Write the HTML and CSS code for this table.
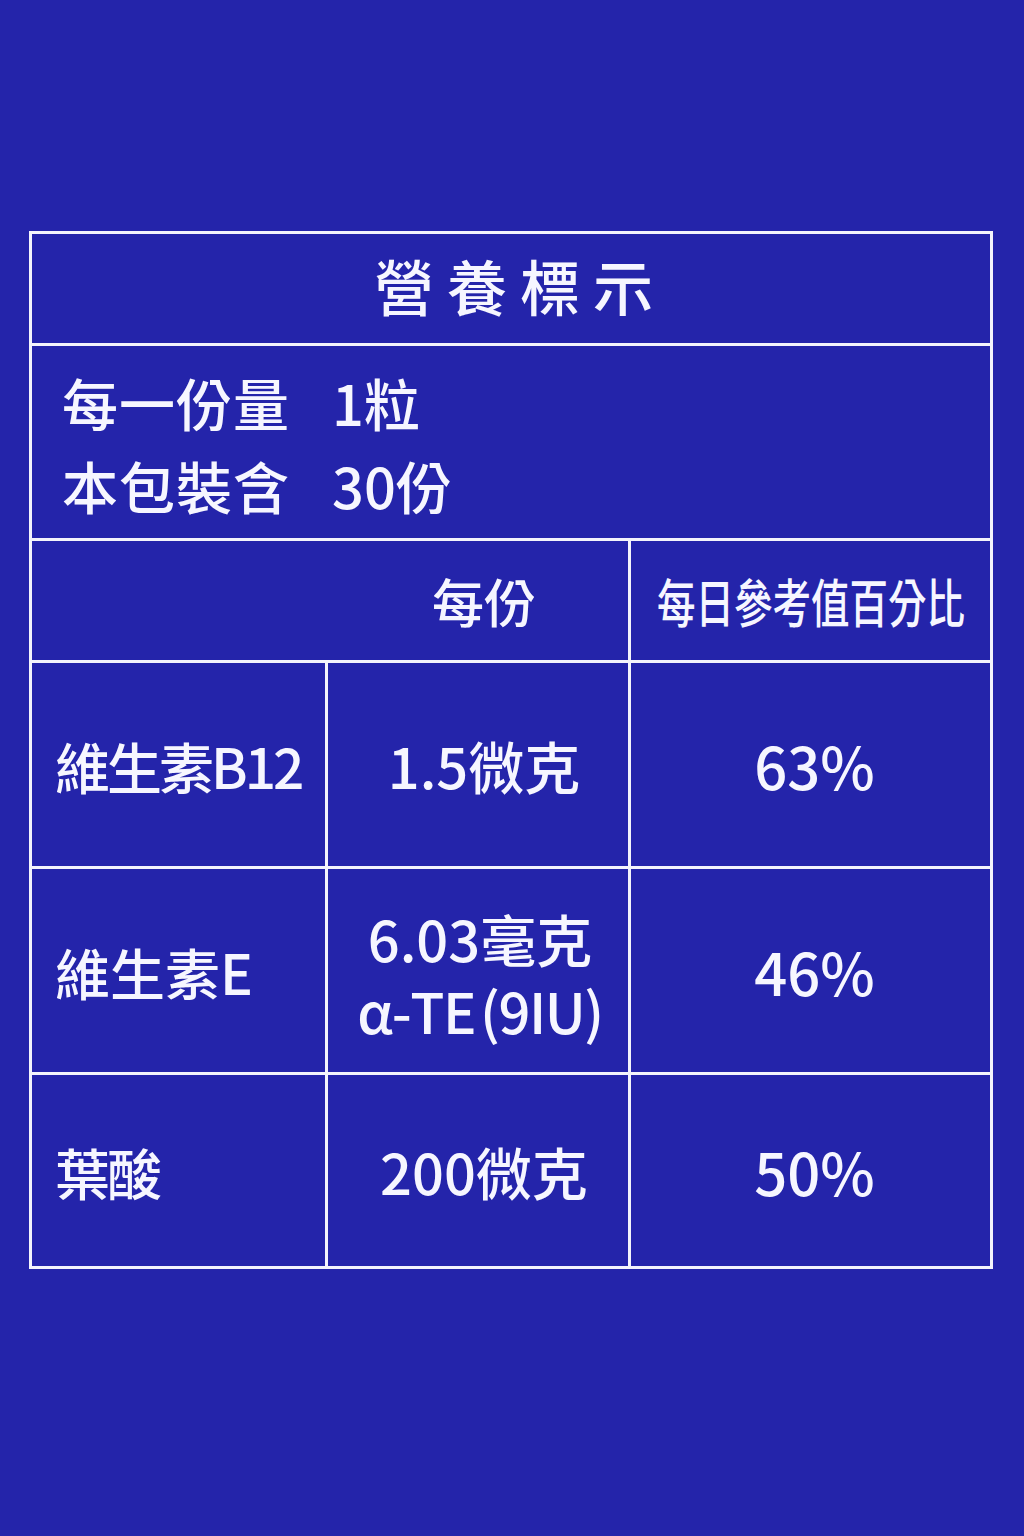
FILE: index.html
```html
<!DOCTYPE html>
<html lang="zh-Hant">
<head>
<meta charset="utf-8">
<title>營養標示</title>
<link rel="stylesheet" href="styles.css">
</head>
<body>
<div class="label">
  <div class="title">營養標示</div>
  <div class="serving">
    <div class="line"><span class="k">每一份量</span><span class="v">1粒</span></div>
    <div class="line"><span class="k">本包裝含</span><span class="v">30份</span></div>
  </div>
  <div class="head head-per">每份</div>
  <div class="head head-dv"><span class="narrow">每日參考值百分比</span></div>
  <div class="cell name">維生素B12</div>
  <div class="cell amt">1.5微克</div>
  <div class="cell pct">63%</div>
  <div class="cell name name-e">維生素E</div>
  <div class="cell amt two"><span class="l1">6.03毫克</span><span class="l2">α-TE (9IU)</span></div>
  <div class="cell pct">46%</div>
  <div class="cell name">葉酸</div>
  <div class="cell amt">200微克</div>
  <div class="cell pct">50%</div>
</div>
</body>
</html>
```
FILE: styles.css
```css
html, body {
  margin: 0;
  padding: 0;
  background: #2424aa;
}
body {
  width: 1024px;
  height: 1536px;
  padding: 231px 0 0 29px;
  box-sizing: border-box;
  font-family: "Noto Sans CJK TC", "Noto Sans", sans-serif;
  color: #f6f6ff;
}
.label {
  box-sizing: border-box;
  width: 964px;
  height: 1038px;
  border: 3px solid #f4f4fc;
  background: #f4f4fc;
  display: grid;
  grid-template-columns: 293px 300px 359px;
  grid-template-rows: 109px 192px 119px 203px 203px 191px;
  gap: 3px;
}
.label > div {
  background: #2424aa;
}
.title {
  grid-column: 1 / 4;
  display: flex;
  align-items: center;
  justify-content: center;
  font-size: 60px;
  font-weight: 500;
  letter-spacing: 13px;
  padding: 0 0 8px 18px;
}
.serving {
  grid-column: 1 / 4;
  padding: 14px 0 0 30px;
  font-size: 56px;
  font-weight: 500;
  line-height: 83px;
}
.serving .k {
  display: inline-block;
  width: 270px;
  letter-spacing: 1px;
}
.head {
  display: flex;
  align-items: center;
  font-size: 52px;
  font-weight: 500;
}
.head-per {
  grid-column: 1 / 3;
  justify-content: center;
  padding-left: 308px;
}
.head-dv {
  justify-content: center;
}
.narrow {
  display: inline-block;
  transform: scaleX(0.74);
  white-space: nowrap;
}
.cell {
  display: flex;
  align-items: center;
  font-size: 56px;
  font-weight: 500;
}
.name {
  padding-left: 23px;
  font-size: 55px;
  letter-spacing: -3px;
}
.name-e {
  letter-spacing: 0;
}
.amt {
  justify-content: center;
  padding-left: 12px;
}
.amt.two {
  flex-direction: column;
  justify-content: center;
  align-items: center;
  padding: 7px 0 0 4px;
}
.amt.two span {
  display: block;
  height: 72px;
  line-height: 72px;
}
.amt.two .l2 {
  letter-spacing: -1.5px;
  word-spacing: -6px;
}
.pct {
  justify-content: center;
  font-size: 58px;
  padding-left: 8px;
}
```
